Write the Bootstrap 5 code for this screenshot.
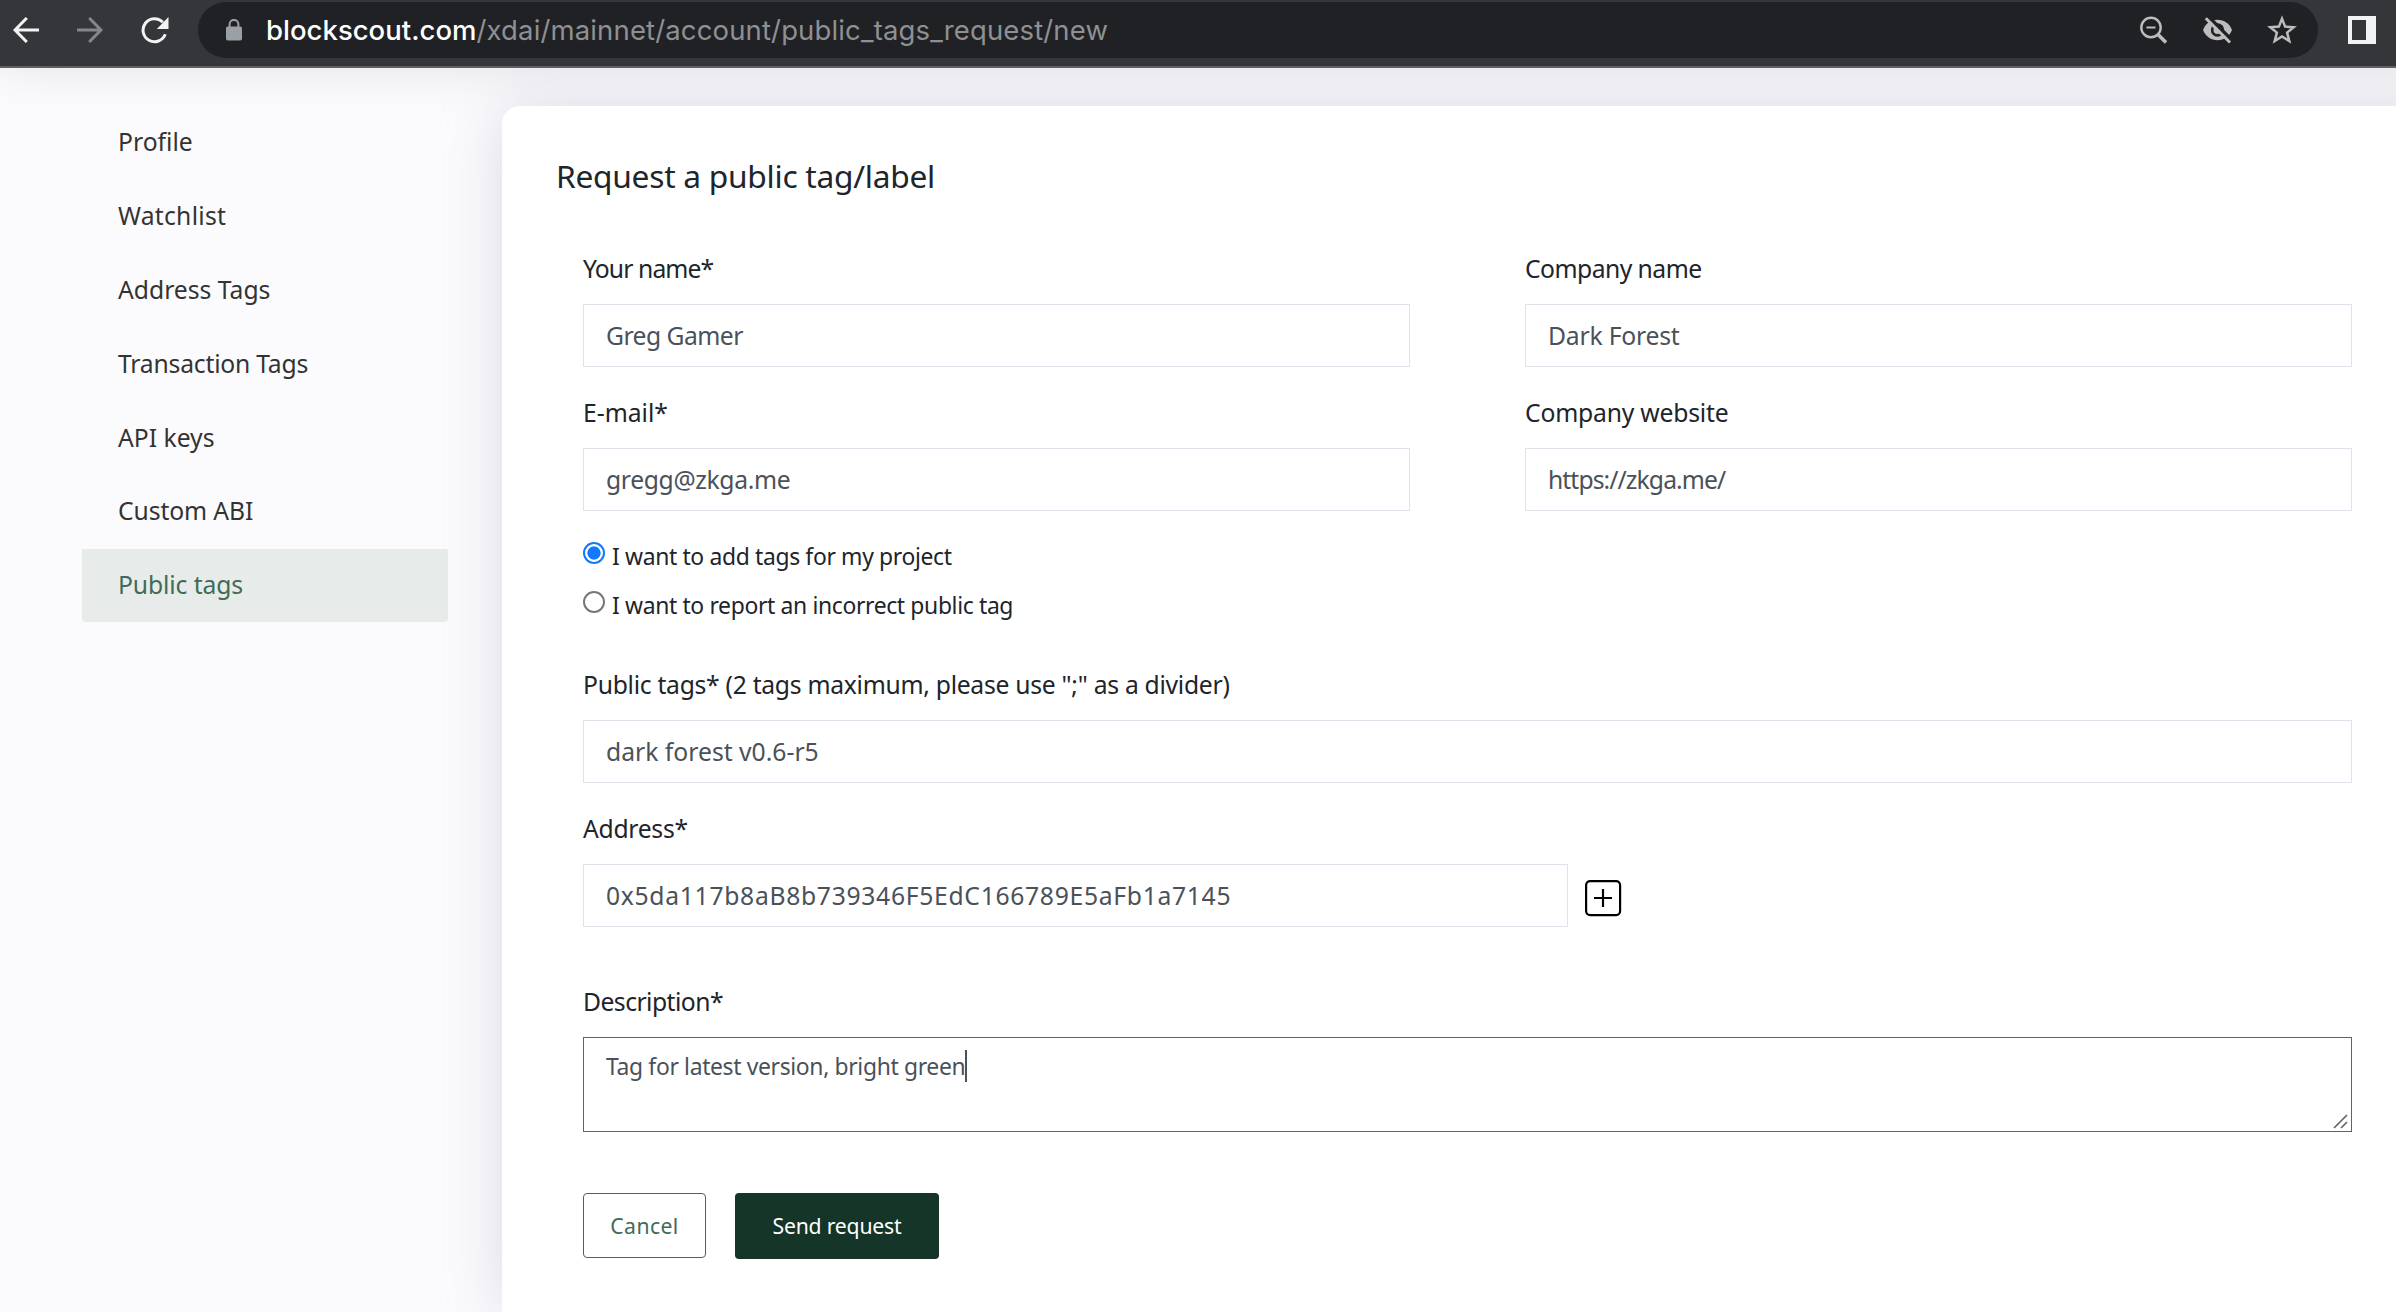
<!DOCTYPE html>
<html lang="en">
<head>
<meta charset="utf-8">
<meta name="viewport" content="width=device-width, initial-scale=1">
<title>Request a public tag/label</title>
<link href="https://cdn.jsdelivr.net/npm/bootstrap@5.3.0/dist/css/bootstrap.min.css" rel="stylesheet">
<style>
  body { font-family: "Noto Sans", sans-serif; font-size: 24.7px; color: #20242b; background: #fbfbfd; height: 1312px; overflow: hidden; }
  svg { display: block; flex: none; }

  /* Browser toolbar */
  .browser-bar { position: relative; z-index: 1; height: 68px; background: #35363a; border-bottom: 2px solid #5f6064; padding: 2px 20px 8px 13px; }
  .bar-shadow { position: absolute; z-index: 0; top: 0; left: 0; width: 100%; height: 140px; overflow: hidden; }
  .bar-shadow::before { content: ""; display: block; height: 68px; margin-right: -100px; box-shadow: 0 0 52px rgba(10, 16, 30, .1); }
  .nav-icons { gap: 38px; width: 185px; flex: none; }
  .omnibox { height: 56px; background: #202124; border-radius: 28px; padding: 0 21px 0 28px; }
  .url { font-family: Inter, sans-serif; font-size: 27.5px; line-height: 56px; color: #8e9093; margin-left: 24px; letter-spacing: .14px; white-space: nowrap; }
  .url b { font-weight: 500; color: #fff; letter-spacing: .02px; }

  /* Account menu */
  .page-area { position: relative; height: 1244px; overflow: hidden; }
  .side-col { width: 502px; flex: none; padding: 37px 54px 0 82px; }
  .side-nav .nav-link { height: 73.9px; line-height: 73px; padding: 0 0 0 36px; color: #333; border-radius: 0 0 4px 4px; white-space: nowrap; }
  .side-nav .nav-link.active { height: 73px; line-height: 72px; margin-top: .6px; color: #416b58; background: #e7ebea; }

  /* Request form: the panel runs on past the right edge of the window */
  .form-panel { margin: 38px -100px 0 0; padding: 50px 144px 0 54px; border: 0; border-radius: 18px 0 0 0; background: #fff; box-shadow: 0 0 60px rgba(176, 171, 203, .42); }
  .form-panel h1 { font-size: 31.7px; font-weight: 400; line-height: 40px; margin: 0 0 53px; letter-spacing: -.26px; }
  .form-body { padding-left: 27px; }
  .two-cols { display: grid; grid-template-columns: 827px 827px; justify-content: space-between; }
  .field { margin-bottom: 26px; }
  .field .form-label { display: block; line-height: 40px; margin: 0 0 15px; }
  .field .form-control { height: 63px; border: 1px solid #e2e2ec; border-radius: 0; padding: 0 22px 1px; font-size: 24.7px; color: #4a5159; background: #fff; }
  .radio-group { padding: 21px 0 35px; }
  .radio-row { height: 49px; font-size: 22.9px; line-height: 51px; gap: 7px; }
  .radio-row .form-check-input { width: 22px; height: 22px; margin: 0 0 8px; border: 2px solid #777; background: #fff; box-shadow: none; flex: none; }
  .radio-row .form-check-input:checked { border-color: #1279fb; background: radial-gradient(circle at center, #1279fb 6.2px, #fff 7px); }
  .addr-input { width: 985px; }
  .field .desc-box { height: 95px; border-color: #4b6f62; padding: 11px 22px; font-size: 22.9px; line-height: 35px; resize: none; }
  .desc-field { padding-top: 55px; }
  .caret { position: absolute; left: 382px; top: 13px; width: 2px; height: 32px; background: #4a5159; }
  .grip { position: absolute; right: 4px; bottom: 3px; }
  .btn-row { gap: 29px; padding-top: 61px; }
  .btn-line, .btn-solid { font-size: 21.2px; line-height: 61px; padding: 0; border-radius: 4px; }
  .btn-line { width: 123px; height: 65px; border: 1px solid #416b58; color: #416b58; }
  .btn-solid { width: 204px; height: 66px; border: 0; background: #153528; color: #fff; line-height: 62px; }

  /* Letter spacing steps */
  .ls-a { letter-spacing: -.1px; }
  .ls-b { letter-spacing: -.2px; }
  .ls-c { letter-spacing: -.28px; }
  .ls-d { letter-spacing: -.35px; }
  .ls-e { letter-spacing: -.54px; }
  .ls-f { letter-spacing: -.9px; }
  .ls-p { letter-spacing: .26px; }
  .ls-q { letter-spacing: .4px; }
  .ls-r { letter-spacing: .69px; }
</style>
</head>
<body>
<div class="bar-shadow"></div>

<header class="browser-bar d-flex align-items-center">
  <div class="nav-icons d-flex align-items-center">
    <svg width="26" height="26" viewBox="0 0 26 26" fill="none" stroke="#f1f3f4" stroke-width="3"><path d="M26 13H2.5M13.8 1 2 13l11.8 12"/></svg>
    <svg width="26" height="26" viewBox="0 0 26 26" fill="none" stroke="#85868a" stroke-width="3"><path d="M0 13h23.5M12.200 1 24 13 12.200 25"/></svg>
    <svg width="28" height="27" viewBox="0 0 28 27"><path d="M24.300 17.300A11.500 11.500 0 1 1 21.800 5.200" fill="none" stroke="#f1f3f4" stroke-width="3"/><path d="M27.500 0v12H15.800z" fill="#f1f3f4"/></svg>
  </div>
  <div class="omnibox d-flex align-items-center flex-grow-1">
    <svg width="16" height="22" viewBox="0 0 16 22"><path d="M3.600 9V5.300a4.400 4.400 0 0 1 8.800 0V9" fill="none" stroke="#9aa0a6" stroke-width="2"/><rect y="7.500" width="16" height="14" rx="1.800" fill="#9aa0a6"/></svg>
    <div class="url flex-grow-1"><b>blockscout.com</b>/xdai/mainnet/account/public_tags_request/new</div>
    <div class="d-flex align-items-center">
      <svg width="63" height="30" viewBox="0 0 63 30" fill="none" stroke="#bdbdbd"><circle cx="12" cy="12.500" r="9.700" stroke-width="2.400"/><path d="M7.500 12.500h9" stroke-width="2"/><path d="m19 19.500 8 8" stroke-width="3.600"/></svg>
      <svg width="65" height="30" viewBox="0 0 65 30"><path d="M1 15C3.500 8.500 9 4.800 15.500 4.800S27.500 8.500 30 15c-2.500 6.500-8 10.200-14.500 10.200S3.500 21.500 1 15z" fill="#bdbdbd"/><circle cx="15.500" cy="15" r="6.700" fill="#202124"/><circle cx="15.500" cy="15" r="4" fill="#bdbdbd"/><path d="M6 1.200 31 26.200" stroke="#202124" stroke-width="3.400"/><path d="M3.800 3.300 28 27.500" stroke="#bdbdbd" stroke-width="3"/></svg>
      <svg width="30" height="30" viewBox="0 0 30 30"><path d="m15 3.600 3.100 8 8.600.6-6.600 5.400 2.200 8.500L15 21.500l-7.300 4.600 2.200-8.500-6.600-5.400 8.600-.6z" fill="none" stroke="#bdbdbd" stroke-width="2.500"/></svg>
    </div>
  </div>
  <svg class="ms-4" width="34" height="28" viewBox="0 0 34 28"><path d="M6 0h28v28H6zM10 4v20h14V4z" fill="#f1f3f4" fill-rule="evenodd"/></svg>
</header>

<div class="page-area d-flex">
  <aside class="side-col">
    <nav class="nav flex-column side-nav">
      <a class="nav-link" href="#">Profile</a>
      <a class="nav-link ls-p" href="#">Watchlist</a>
      <a class="nav-link" href="#">Address Tags</a>
      <a class="nav-link ls-b" href="#">Transaction Tags</a>
      <a class="nav-link" href="#">API keys</a>
      <a class="nav-link ls-a" href="#">Custom ABI</a>
      <a class="nav-link active ls-a" href="#">Public tags</a>
    </nav>
  </aside>

  <main class="card form-panel flex-grow-1">
    <h1>Request a public tag/label</h1>
    <form class="form-body">
      <div class="two-cols">
        <div class="field"><label class="form-label ls-f">Your name*</label><input class="form-control ls-e" value="Greg Gamer"></div>
        <div class="field"><label class="form-label ls-e">Company name</label><input class="form-control ls-b" value="Dark Forest"></div>
        <div class="field mb-0"><label class="form-label">E-mail*</label><input class="form-control ls-d" value="gregg@zkga.me"></div>
        <div class="field mb-0"><label class="form-label ls-b">Company website</label><input class="form-control ls-f" value="https://zkga.me/"></div>
      </div>

      <div class="radio-group">
        <label class="radio-row d-flex align-items-center ls-d"><input class="form-check-input" type="radio" name="kind" checked>I want to add tags for my project</label>
        <label class="radio-row d-flex align-items-center ls-d"><input class="form-check-input" type="radio" name="kind">I want to report an incorrect public tag</label>
      </div>

      <div class="field"><label class="form-label ls-c">Public tags* (2 tags maximum, please use ";" as a divider)</label><input class="form-control" value="dark forest v0.6-r5"></div>

      <div class="field mb-0">
        <label class="form-label ls-c">Address*</label>
        <div class="d-flex align-items-center">
          <input class="form-control addr-input ls-r" value="0x5da117b8aB8b739346F5EdC166789E5aFb1a7145">
          <svg class="ms-3 mt-1" width="38" height="38" viewBox="0 0 38 38" fill="none" stroke="#000" stroke-width="2.200"><rect x="2.100" y="2.100" width="34" height="34" rx="4"/><path d="M19 10v18M10 19h18"/></svg>
        </div>
      </div>

      <div class="field desc-field mb-0">
        <label class="form-label ls-e">Description*</label>
        <div class="position-relative">
          <textarea class="form-control desc-box ls-d">Tag for latest version, bright green</textarea>
          <span class="caret"></span>
          <svg class="grip" width="15" height="15" viewBox="0 0 15 15" stroke="#666" stroke-width="1.700"><path d="M1 14 14 1M8 14l6-6"/></svg>
        </div>
      </div>

      <div class="btn-row d-flex align-items-start">
        <button type="button" class="btn btn-line ls-q">Cancel</button>
        <button type="button" class="btn btn-solid ls-b">Send request</button>
      </div>
    </form>
  </main>
</div>
<script src="https://cdn.jsdelivr.net/npm/bootstrap@5.3.0/dist/js/bootstrap.bundle.min.js"></script>
</body>
</html>
